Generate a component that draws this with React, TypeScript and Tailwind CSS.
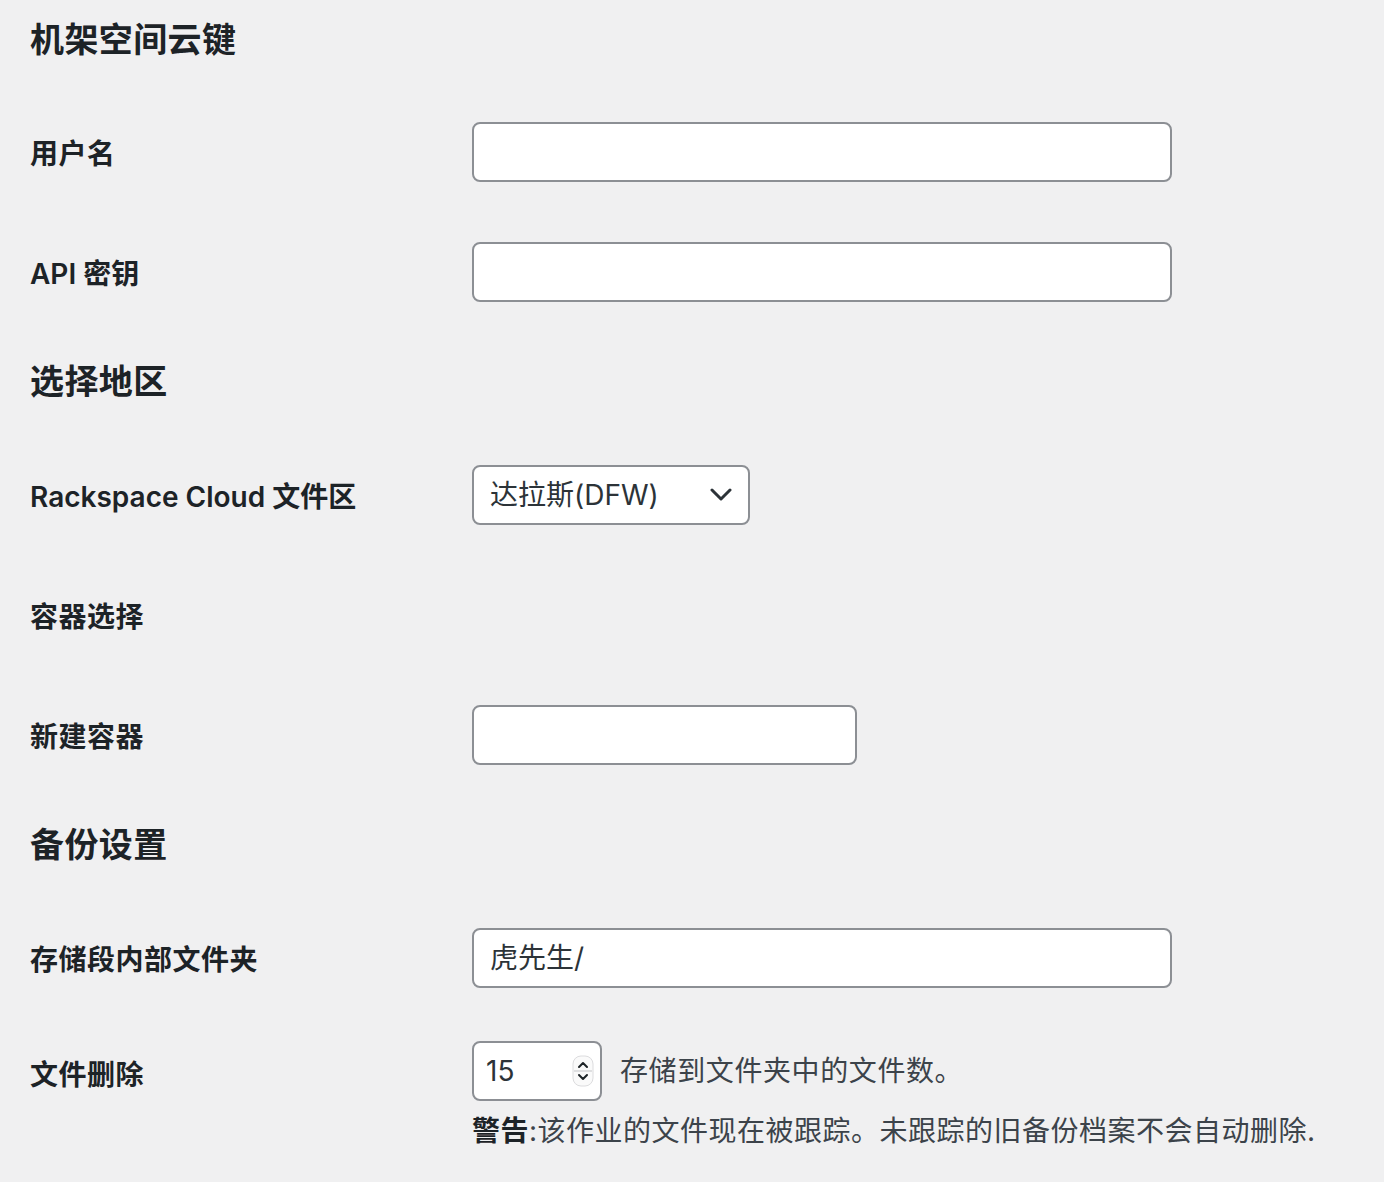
import React from 'react';

const FONT = '"Inter", "Noto Sans CJK SC", sans-serif';

// 字段输入框
function TextField({ width, value }: { width: string; value?: string }) {
  return (
    <div
      className={`${width} h-[60px] flex items-center px-[16px] bg-white border-2 border-[#8c8f94] rounded-[8px] text-[28px] text-[#2c3338]`}
    >
      {value}
    </div>
  );
}

function Heading({ children, first }: { children: React.ReactNode; first?: boolean }) {
  return (
    <h2
      className={`${first ? 'pt-[22px] pb-[34px]' : 'pt-[32px] pb-[35px]'} text-[34px] leading-[36px] font-semibold tracking-[0.4px] text-[#1d2327]`}
    >
      {children}
    </h2>
  );
}

function Row({ label, cjk = true, children }: { label: string; cjk?: boolean; children?: React.ReactNode }) {
  return (
    <div className="flex items-center py-[30px]">
      <div
        className={`w-[442px] pt-[3px] text-[28px] leading-[36px] font-semibold text-[#1d2327] ${cjk ? 'tracking-[0.5px]' : ''}`}
      >
        {label}
      </div>
      <div className="h-[60px] flex items-center">{children}</div>
    </div>
  );
}

export default function App() {
  return (
    <div className="min-h-[1182px] bg-[#f0f0f1] pl-[30px]" style={{ fontFamily: FONT }}>
      <Heading first>机架空间云键</Heading>
      <Row label="用户名">
        <TextField width="w-[700px]" />
      </Row>
      <Row label="API 密钥" cjk={false}>
        <TextField width="w-[700px]" />
      </Row>

      <Heading>选择地区</Heading>
      <Row label="Rackspace Cloud 文件区" cjk={false}>
        <div className="w-[278px] h-[60px] flex items-center justify-between pl-[16px] pr-[16px] bg-white border-2 border-[#8c8f94] rounded-[8px] text-[28px] text-[#2c3338]">
          <span>达拉斯(DFW)</span>
          <svg width="22" height="14" viewBox="0 0 22 14" fill="none">
            <path d="M2 2l9 9 9-9" stroke="#2c3338" strokeWidth="3" strokeLinecap="round" strokeLinejoin="round" />
          </svg>
        </div>
      </Row>
      <Row label="容器选择" />
      <Row label="新建容器">
        <TextField width="w-[385px]" />
      </Row>

      <Heading>备份设置</Heading>
      <Row label="存储段内部文件夹">
        <TextField width="w-[700px]" value="虎先生/" />
      </Row>

      <div className="flex pt-[23px]">
        <div className="w-[442px] pt-[16px] text-[28px] leading-[36px] font-semibold tracking-[0.5px] text-[#1d2327]">
          文件删除
        </div>
        <div>
          <div className="flex items-center">
            <div className="w-[130px] h-[60px] flex items-center justify-between pl-[12px] pr-[6px] bg-white border-2 border-[#8c8f94] rounded-[8px] text-[28px] text-[#2c3338]">
              <span>15</span>
              <svg width="22" height="32" viewBox="0 0 22 32" fill="none">
                <rect x="1" y="1" width="20" height="30" rx="8" fill="#fafafa" stroke="#dcdcde" />
                <line x1="2" y1="16" x2="20" y2="16" stroke="#c3c4c7" />
                <path d="M7 12l4-4 4 4" stroke="#1d2327" strokeWidth="2" strokeLinecap="round" strokeLinejoin="round" />
                <path d="M7 20l4 4 4-4" stroke="#1d2327" strokeWidth="2" strokeLinecap="round" strokeLinejoin="round" />
              </svg>
            </div>
            <span className="ml-[18px] text-[28px] leading-[36px] tracking-[0.6px] text-[#3c434a]">
              存储到文件夹中的文件数。
            </span>
          </div>
          <p className="mt-[10px] text-[28px] leading-[40px] tracking-[0.5px] text-[#3c434a]">
            <span className="font-semibold text-[#1d2327]">警告</span>:该作业的文件现在被跟踪。未跟踪的旧备份档案不会自动删除.
          </p>
        </div>
      </div>
    </div>
  );
}
